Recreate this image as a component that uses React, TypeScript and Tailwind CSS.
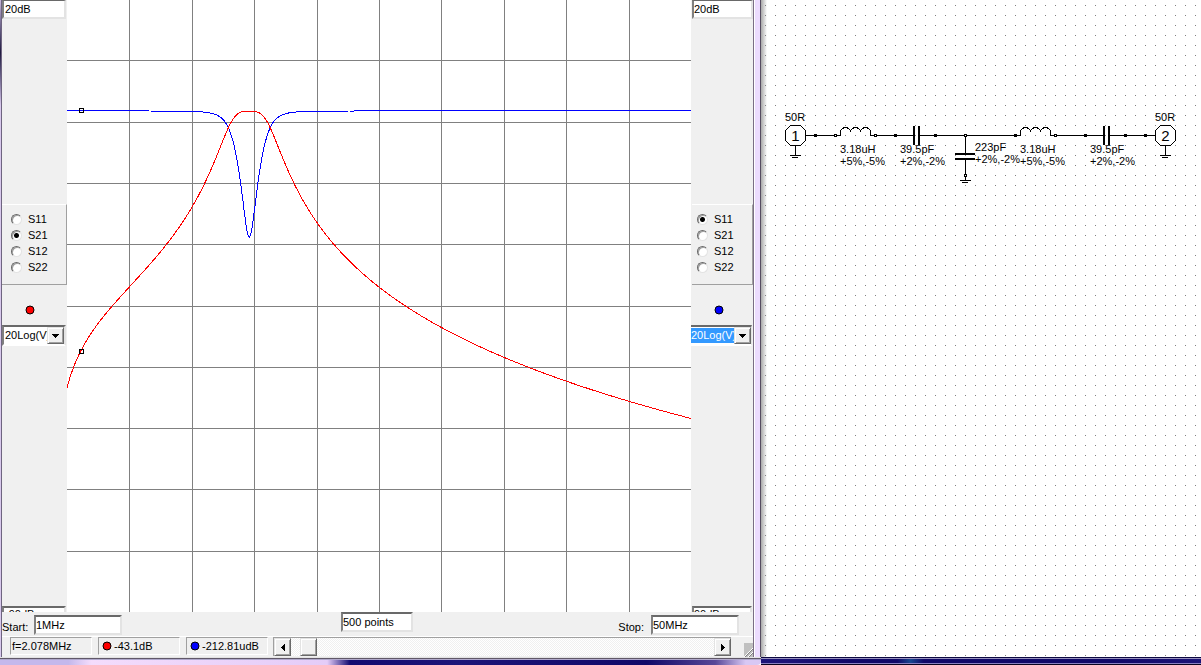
import { useState } from 'react';

const START_MHZ = 1;
const STOP_MHZ = 50;
const POINTS = 500;
const PLOT_W = 624;
const PLOT_H = 612;

const PARAMS = ['S11', 'S21', 'S12', 'S22'];

// Symmetric T section: series L + C, shunt C, series L + C in a 50 ohm system
function solve(mhz: number) {
    const w = 2 * Math.PI * mhz * 1e6;
    const xs = w * 3.18e-6 - 1 / (w * 39.5e-12);
    const bp = w * 223e-12;
    const a = 1 - xs * bp;
    const b = (xs * (2 - xs * bp)) / 50;
    const c = bp * 50;
    const den = Math.hypot(2 * a, b + c);
    return {
        s21: 20 * Math.log10(2 / den),
        s11: 20 * Math.log10(Math.abs(b - c) / den + 1e-12),
    };
}

const freqAt = (i: number) => START_MHZ + ((STOP_MHZ - START_MHZ) * i) / POINTS;
const xAt = (i: number) => (i * PLOT_W) / POINTS;
const yAt = (db: number) => ((20 - db) * (PLOT_H + 1)) / 110 - 0.5;

function trace(key: 's11' | 's21') {
    const pts: string[] = [];
    for (let i = 0; i <= POINTS; i++) {
        pts.push(`${xAt(i).toFixed(2)},${yAt(solve(freqAt(i))[key]).toFixed(2)}`);
    }
    return pts.join(' ');
}

function formatDb(db: number) {
    if (Math.abs(db) < 0.001) return `${(db * 1e6).toFixed(2)}udB`;
    return `${db.toFixed(1)}dB`;
}

const sunken =
    'rounded-none border-2 border-t-[#696969] border-l-[#808080] border-r-[#e3e3e3] border-b-[#e3e3e3] bg-white text-[11px] text-black outline-none';
const raised =
    'flex items-center justify-center border border-t-[#e3e3e3] border-l-[#e3e3e3] border-r-[#696969] border-b-[#696969] bg-[#f0f0f0] shadow-[inset_1px_1px_0_#fff,inset_-1px_-1px_0_#a0a0a0]';

function Dot({ color }: { color: string }) {
    return (
        <svg width="10" height="10" className="block shrink-0">
            <circle cx="5" cy="5" r="4" fill={color} stroke="#000" />
        </svg>
    );
}

type SideProps = {
    name: string;
    initial: string;
    color: string;
    bottom: string;
    right?: boolean;
};

function SidePanel({ name, initial, color, bottom, right }: SideProps) {
    const [param, setParam] = useState(initial);

    return (
        <aside className={`flex shrink-0 flex-col bg-[#f0f0f0] ${right ? 'w-[62px] pl-px' : 'w-[65px]'}`}>
            <input
                aria-label={`${name} top`}
                defaultValue="20dB"
                className={`h-[19px] shrink-0 border-t ${sunken} ${right ? 'w-full' : 'w-16 pl-px'}`}
            />

            <fieldset
                className={`mt-[185px] flex h-[81px] shrink-0 flex-col border-t border-r border-b border-t-white border-r-[#a0a0a0] border-b-[#a0a0a0] pt-[6px] ${
                    right ? 'pl-[5px]' : 'pl-[9px]'
                }`}
            >
                {PARAMS.map((p) => (
                    <label key={p} className="flex h-4 items-center gap-[6px] text-[11px] leading-4">
                        <input
                            type="radio"
                            name={name}
                            checked={param === p}
                            onChange={() => setParam(p)}
                            className="h-[11px] w-[11px] appearance-none rounded-full border border-t-[#696969] border-l-[#696969] border-r-[#e3e3e3] border-b-[#e3e3e3] bg-white shadow-[inset_1px_1px_0_#a0a0a0] checked:bg-[radial-gradient(circle,#000_2px,#fff_3px)]"
                        />
                        {p}
                    </label>
                ))}
            </fieldset>

            <div className={`mt-5 ${right ? 'pl-[22px]' : 'pl-[23px]'}`}>
                <Dot color={color} />
            </div>

            <div
                className={`mt-[10px] flex h-[21px] shrink-0 border-t-2 border-b-2 border-t-[#696969] border-b-white bg-white ${
                    right ? '-ml-px w-[61px] border-r' : 'w-16 border-x-2'
                } border-r-[#e3e3e3] border-l-[#808080]`}
            >
                <div className={`min-w-0 flex-1 overflow-hidden ${right ? 'py-px' : 'py-px pl-px'}`}>
                    <select
                        aria-label={`${name} format`}
                        className={`block h-[15px] w-20 appearance-none text-[11px] leading-[15px] outline-none ${
                            right ? 'bg-[#3399ff] text-white' : 'bg-white text-black'
                        }`}
                    >
                        <option>20Log(V)</option>
                        <option>Phase</option>
                    </select>
                </div>
                <span className={`pointer-events-none h-[17px] w-[17px] shrink-0 ${raised}`}>
                    <svg width="7" height="4" shapeRendering="crispEdges">
                        <path d="M0 0h7v1h-1v1h-1v1h-1v1h-1v-1h-1v-1h-1v-1h-1z" />
                    </svg>
                </span>
            </div>

            {/* Lower limit box, cut off by the row of sweep controls */}
            <div className="mt-auto h-[6px] overflow-hidden">
                <input
                    aria-label={`${name} bottom`}
                    defaultValue={bottom}
                    className={`block h-[15px] leading-3 ${sunken} ${right ? 'w-[60px]' : 'w-16 pl-px'}`}
                />
            </div>
        </aside>
    );
}

function Plot({ index }: { index: number }) {
    const now = solve(freqAt(index));
    const lines = [1, 2, 3, 4, 5, 6, 7, 8, 9];

    return (
        <svg
            viewBox={`0 0 ${PLOT_W} ${PLOT_H}`}
            preserveAspectRatio="none"
            shapeRendering="crispEdges"
            className="block h-full min-w-0 flex-1 bg-white"
        >
            {lines.map((k) => (
                <g key={k} fill="#808080">
                    <rect x={Math.round(k * 62.4)} y="0" width="1" height={PLOT_H} />
                    <rect x="0" y={Math.round(k * 61.3 - 1)} width={PLOT_W} height="1" />
                </g>
            ))}
            <polyline points={trace('s11')} fill="none" stroke="#0000ff" />
            <polyline points={trace('s21')} fill="none" stroke="#ff0000" />
            {[now.s11, now.s21].map((db, i) => (
                <rect
                    key={i}
                    x={Math.round(xAt(index)) - 1.5}
                    y={Math.floor(yAt(db)) - 1.5}
                    width="4"
                    height="4"
                    fill="none"
                    stroke="#000"
                />
            ))}
        </svg>
    );
}

function StatusBox({ text, color }: { text: string; color?: string }) {
    return (
        <div
            className={`flex h-[18px] w-[82px] shrink-0 items-center gap-[2px] border border-t-[#a0a0a0] border-l-[#a0a0a0] border-r-white border-b-white text-[11px] leading-4 whitespace-nowrap ${
                color ? 'pl-[3px]' : 'pl-px'
            }`}
        >
            {color && <Dot color={color} />}
            {text}
        </div>
    );
}

function Wire({ d }: { d: string }) {
    return <path d={d} fill="none" stroke="#000" />;
}

function Node({ x, y = 135, open }: { x: number; y?: number; open?: boolean }) {
    return open ? (
        <rect x={x - 0.5} y={y - 0.5} width="2" height="2" fill="#fff" stroke="#000" />
    ) : (
        <rect x={x - 1} y={y - 1} width="3" height="3" />
    );
}

function Ground({ x, y }: { x: number; y: number }) {
    return (
        <g>
            <rect x={x - 5} y={y} width="11" height="1" />
            <rect x={x - 3} y={y + 2} width="6" height="1" />
        </g>
    );
}

function Port({ x, n }: { x: number; n: string }) {
    return (
        <g>
            <path
                d={`M${x - 4.5} 125.5h10l5 5v10l-5 5h-10l-5 -5v-10z`}
                fill="#fff"
                stroke="#000"
            />
            <Wire d={`M${x + 0.5} 145v10`} />
            <Ground x={x} y={155} />
            <text x={x + 0.5} y="141" textAnchor="middle" fontSize="15">
                {n}
            </text>
            <text x={x - 10} y="121">50R</text>
        </g>
    );
}

function Inductor({ x }: { x: number }) {
    return (
        <g>
            <path
                d={`M${x - 5} 135.5h5.5v-4c1 -5 9 -5 10 0c1 -5 9 -5 10 0c1 -5 9 -5 10 0v4h5`}
                fill="none"
                stroke="#000"
            />
            <text x={x} y="153">3.18uH</text>
            <text x={x} y="165">+5%,-5%</text>
        </g>
    );
}

function Capacitor({ x }: { x: number }) {
    return (
        <g>
            <rect x={x - 2} y="126" width="2" height="19" />
            <rect x={x + 3} y="126" width="2" height="19" />
            <text x={x - 15} y="153">39.5pF</text>
            <text x={x - 15} y="165">+2%,-2%</text>
        </g>
    );
}

function Schematic() {
    return (
        <svg
            className="block h-full w-full font-['Liberation_Sans',Arial,sans-serif] text-[11px]"
            shapeRendering="crispEdges"
            fill="#000"
        >
            <defs>
                <pattern id="snap" width="10" height="10" patternUnits="userSpaceOnUse">
                    <rect x="4" y="5" width="1" height="1" fill="#808080" />
                </pattern>
            </defs>
            <rect width="100%" height="100%" fill="url(#snap)" />

            <Wire d="M45 135.5H75M114 135.5H152M159 135.5H255M294 135.5H342M349 135.5H394" />
            <Wire d="M204.5 135V153M204.5 160V180" />
            <Port x={34} n="1" />
            <Inductor x={79} />
            <Capacitor x={154} />

            <rect x="194" y="153" width="20" height="2" />
            <rect x="194" y="158" width="20" height="2" />
            <Ground x={204} y={180} />
            <text x="214" y="151">223pF</text>
            <text x="214" y="163">+2%,-2%</text>

            <Inductor x={259} />
            <Capacitor x={344} />
            <Port x={404} n="2" />

            <Node x={54} />
            <Node x={74} open />
            <Node x={114} open />
            <Node x={134} />
            <Node x={174} />
            <Node x={204} open />
            <Node x={204} y={175} open />
            <Node x={254} />
            <Node x={294} open />
            <Node x={324} />
            <Node x={364} />
            <Node x={384} />
        </svg>
    );
}

export default function App() {
    const [index, setIndex] = useState(11);
    const now = solve(freqAt(index));

    return (
        <div className="flex h-screen overflow-hidden bg-white font-['Liberation_Sans',Arial,sans-serif] text-[11px] text-black">
            {/* Analysis window */}
            <section className="flex min-w-0 flex-1 flex-col">
                <div className="flex min-h-0 flex-1">
                    <div className="w-[2px] shrink-0 border-r border-[#6e6480] bg-linear-to-b from-[#c9b8dc] via-[#201a40] via-8% to-[#d8c8ec] to-16%" />

                    <main className="flex min-w-0 flex-1 flex-col bg-[#f0f0f0]">
                        <div className="flex min-h-0 flex-1">
                            <SidePanel name="left" initial="S21" color="#ff0000" bottom="-90dB" />
                            <Plot index={index} />
                            <SidePanel name="right" initial="S11" color="#0000ff" bottom="90dB" right />
                        </div>

                        <div className="grid h-6 shrink-0 grid-cols-[1fr_auto_1fr] items-start pr-px">
                            <label className="flex items-center gap-[7px] pt-[3px]">
                                <span className="w-[25px] pt-1">Start:</span>
                                <input defaultValue="1MHz" className={`h-5 w-[88px] ${sunken}`} />
                            </label>
                            <input aria-label="Points" defaultValue="500 points" className={`h-5 w-[72px] ${sunken}`} />
                            <label className="flex items-center justify-end gap-[7px] pt-[3px] pr-[13px]">
                                <span className="pt-1">Stop:</span>
                                <input defaultValue="50MHz" className={`h-5 w-[88px] ${sunken}`} />
                            </label>
                        </div>

                        <div className="flex h-[21px] shrink-0 gap-[6px] border-t border-white pl-2">
                            <StatusBox text={`f=${freqAt(index).toFixed(3)}MHz`} />
                            <StatusBox text={formatDb(now.s21)} color="#ff0000" />
                            <StatusBox text={formatDb(now.s11)} color="#0000ff" />
                            <div className="-ml-px flex h-[19px] min-w-0 flex-1 border-t border-l border-[#a0a0a0]">
                                <button
                                    aria-label="Previous point"
                                    onClick={() => setIndex(Math.max(0, index - 1))}
                                    className={`w-[17px] shrink-0 ${raised}`}
                                >
                                    <svg width="4" height="7" shapeRendering="crispEdges">
                                        <path d="M4 0v7h-1v-1h-1v-1h-1v-1h-1v-1h1v-1h1v-1h1v-1z" />
                                    </svg>
                                </button>
                                <input
                                    type="range"
                                    aria-label="Frequency point"
                                    min={0}
                                    max={POINTS - 1}
                                    value={index}
                                    onChange={(e) => setIndex(Number(e.target.value))}
                                    className="h-[18px] min-w-0 flex-1 appearance-none bg-[repeating-conic-gradient(#f0f0f0_0_25%,#fff_0_50%)] bg-[length:2px_2px] outline-none [&::-webkit-slider-thumb]:h-[18px] [&::-webkit-slider-thumb]:w-[17px] [&::-webkit-slider-thumb]:appearance-none [&::-webkit-slider-thumb]:border [&::-webkit-slider-thumb]:border-t-[#e3e3e3] [&::-webkit-slider-thumb]:border-l-[#e3e3e3] [&::-webkit-slider-thumb]:border-r-[#696969] [&::-webkit-slider-thumb]:border-b-[#696969] [&::-webkit-slider-thumb]:bg-[#f0f0f0] [&::-webkit-slider-thumb]:shadow-[inset_1px_1px_0_#fff,inset_-1px_-1px_0_#a0a0a0]"
                                />
                                <button
                                    aria-label="Next point"
                                    onClick={() => setIndex(Math.min(POINTS - 1, index + 1))}
                                    className={`w-[17px] shrink-0 ${raised}`}
                                >
                                    <svg width="4" height="7" shapeRendering="crispEdges">
                                        <path d="M0 0v7h1v-1h1v-1h1v-1h1v-1h-1v-1h-1v-1h-1v-1z" />
                                    </svg>
                                </button>
                            </div>
                            {/* Size grip */}
                            <svg width="16" height="15" className="block shrink-0 self-end">
                                <path d="M7 1h9v14h-9z" fill="#c0c0c0" />
                                <path d="M7 15L16 6M11 15L16 10" stroke="#fff" />
                                <path d="M8 15L16 7M12 15L16 11" stroke="#808080" />
                            </svg>
                        </div>
                    </main>

                    <div className="w-2 shrink-0 border-r border-l border-r-[#554c60] border-l-[#7a6e84] bg-[#ecdcfe] shadow-[inset_1px_0_0_#fff]" />
                </div>

                <div className="flex h-2 shrink-0 flex-col border-t border-[#e3e3e3]">
                    <div className="h-px bg-[#605868]" />
                    <div className="h-px bg-[#b0a8cc]" />
                    <div className="flex-1 rounded-br bg-[linear-gradient(90deg,#c4b8ec_0,#c4b8ec_9%,#f4dcfc_12%,#e4ccf8_43%,#120a70_46%,#1c1478_60%,#100868_85%,#584898_94%,#d8c8f4_98%)]" />
                </div>
            </section>

            {/* Schematic editor */}
            <section className="flex w-[440px] shrink-0 flex-col">
                <div className="min-h-0 flex-1 bg-linear-to-r from-[#a8a8a8] to-white to-[6px]">
                    <Schematic />
                </div>
                <div className="flex h-2 shrink-0 flex-col bg-[linear-gradient(90deg,#1c1478,#1c1478_6%,#100868_20%,#100868_31%,#184890_34%,#100868_37%,#100868_80%,#1c1478)]">
                    <div className="h-px bg-[#0c0840]" />
                    <div className="h-px bg-[#9890c0]" />
                    <div className="mt-auto h-px bg-[#8880c0]" />
                    <div className="h-px bg-[#080420]" />
                </div>
            </section>
        </div>
    );
}
